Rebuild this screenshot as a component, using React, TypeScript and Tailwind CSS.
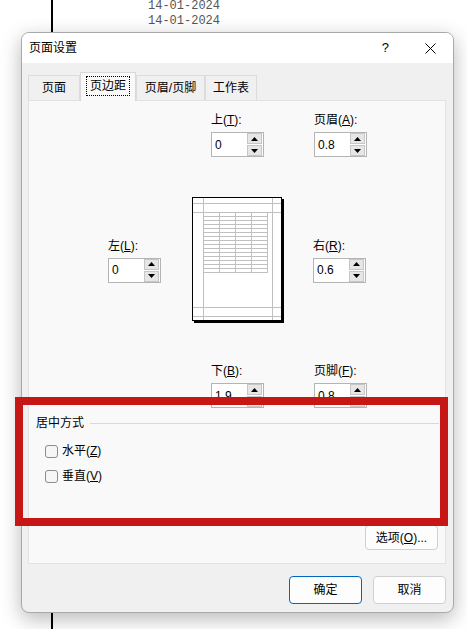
import React from "react";

const font = { fontFamily: '"Liberation Sans", "Noto Sans CJK SC", sans-serif' };

const Tri = ({ up }: { up?: boolean }) => (
  <svg width="7" height="4" viewBox="0 0 7 4">
    <path d={up ? "M0 4 L3.5 0 L7 4 Z" : "M0 0 L3.5 4 L7 0 Z"} fill="#000" />
  </svg>
);

const SpinBtn = ({ up }: { up?: boolean }) => (
  <div className="flex h-[11px] w-[15px] items-center justify-center border border-[#c6c6c6] bg-[#e6e6e6]">
    <Tri up={up} />
  </div>
);

const Spin = ({ value }: { value: string }) => (
  <div className="flex h-[25px] w-[53px] items-center border border-[#b4b4b4] bg-white pl-[3px] pr-px">
    <span className="flex-1 leading-4">{value}</span>
    <div className="flex flex-col gap-px">
      <SpinBtn up />
      <SpinBtn />
    </div>
  </div>
);

const Field = ({ name, k, value }: { name: string; k: string; value: string }) => (
  <div className="flex w-[53px] flex-col gap-1">
    <div className="h-4 whitespace-nowrap leading-4">
      {name}(<u>{k}</u>):
    </div>
    <Spin value={value} />
  </div>
);

const Preview = () => {
  const rows = [] as number[];
  for (let y = 15; y <= 75; y += 4) rows.push(y);
  return (
    <svg width="92" height="126" viewBox="0 0 92 126" className="block">
      <rect x="0.5" y="0.5" width="89" height="123" fill="#fff" stroke="#000" />
      <rect x="90" y="2" width="2" height="124" fill="#000" />
      <rect x="2" y="124" width="90" height="2" fill="#000" />
      <g stroke="#c0c0c0" strokeWidth="1">
        <line x1="11.5" y1="1" x2="11.5" y2="123" />
        <line x1="80.5" y1="1" x2="80.5" y2="123" />
        <line x1="1" y1="6.5" x2="89" y2="6.5" />
        <line x1="1" y1="15.5" x2="89" y2="15.5" />
        <line x1="1" y1="110.5" x2="89" y2="110.5" />
        <line x1="1" y1="119.5" x2="89" y2="119.5" />
        {rows.map((y) => (
          <line key={y} x1="11" y1={y + 0.5} x2="75" y2={y + 0.5} />
        ))}
        {[27, 43, 59, 75].map((x) => (
          <line key={x} x1={x + 0.5} y1="15" x2={x + 0.5} y2="76" />
        ))}
      </g>
    </svg>
  );
};

const Check = ({ label, k }: { label: string; k: string }) => (
  <div className="flex h-4 items-center gap-1 pl-4">
    <div className="h-[13px] w-[13px] rounded-[3px] border border-[#8d8d8d] bg-[#f6f6f6]" />
    <span className="leading-4">
      {label}(<u>{k}</u>)
    </span>
  </div>
);

export default function App() {
  return (
    <div className="relative h-[629px] w-[467px] overflow-hidden bg-white text-[12px] text-black" style={font}>
      {/* page behind the dialog */}
      <div className="absolute left-[51px] top-0 h-full w-[2px] bg-black" />
      <div
        className="absolute left-[148px] top-[-1px] text-[12px] leading-[15px] text-[#555]"
        style={{ fontFamily: '"Liberation Mono", monospace' }}
      >
        <div>14-01-2024</div>
        <div>14-01-2024</div>
      </div>

      {/* dialog */}
      <div className="absolute left-[21px] top-[32px] flex h-[581px] w-[433px] flex-col overflow-hidden rounded-[8px] border border-[#a9a9a9] bg-[#f0f0f0] shadow-[0_6px_20px_rgba(0,0,0,0.28)]">
        <div className="flex h-[30px] shrink-0 items-center bg-white pl-[7px]">
          <span className="flex-1 leading-4">页面设置</span>
          <span className="mr-[36px] text-[13px] leading-4">?</span>
          <svg width="11" height="11" viewBox="0 0 11 11" className="mr-[17px]">
            <path d="M0.5 0.5 L10.5 10.5 M10.5 0.5 L0.5 10.5" stroke="#000" strokeWidth="1" />
          </svg>
        </div>

        <div className="flex flex-1 flex-col pl-[6px] pt-[9px]">
          {/* tabs */}
          <div className="relative z-10 flex h-[28px] items-end">
            <div className="flex h-[25px] w-[52px] items-center justify-center border border-b-0 border-[#dcdcdc] bg-[#f0f0f0]">
              页面
            </div>
            <div className="-mb-px flex h-[29px] w-[56px] items-center justify-center border border-b-0 border-[#d9d9d9] bg-[#f9f9f9] pb-[2px]">
              <span className="border border-dotted border-black px-[3px] py-[1px] leading-4">页边距</span>
            </div>
            <div className="flex h-[25px] w-[69px] items-center justify-center border border-b-0 border-[#dcdcdc] bg-[#f0f0f0]">
              页眉/页脚
            </div>
            <div className="flex h-[25px] w-[52px] items-center justify-center border border-b-0 border-[#dcdcdc] bg-[#f0f0f0]">
              工作表
            </div>
          </div>

          {/* panel */}
          <div className="flex h-[464px] w-[418px] flex-col border border-[#e2e2e2] bg-[#f9f9f9] pt-[11px] pb-[13px]">
            <div className="flex pl-[182px]">
              <Field name="上" k="T" value="0" />
              <div className="ml-[50px]">
                <Field name="页眉" k="A" value="0.8" />
              </div>
            </div>

            <div className="mt-[40px] flex items-center pl-[79px]">
              <Field name="左" k="L" value="0" />
              <div className="ml-[31px]">
                <Preview />
              </div>
              <div className="ml-[29px]">
                <Field name="右" k="R" value="0.6" />
              </div>
            </div>

            <div className="mt-[40px] flex pl-[182px]">
              <Field name="下" k="B" value="1.9" />
              <div className="ml-[50px]">
                <Field name="页脚" k="F" value="0.8" />
              </div>
            </div>

            <div className="mt-[7px] flex items-center pl-[7px] pr-[6px]">
              <span className="leading-4">居中方式</span>
              <div className="ml-[6px] h-px flex-1 bg-[#d8d8d8]" />
            </div>
            <div className="mt-[12px]">
              <Check label="水平" k="Z" />
            </div>
            <div className="mt-[9px]">
              <Check label="垂直" k="V" />
            </div>

            <div className="mt-auto flex justify-end pr-[7px]">
              <div className="flex h-[25px] w-[73px] items-center justify-center rounded-[4px] border border-[#d0d0d0] bg-[#fdfdfd] leading-4">
                选项(<u>O</u>)...
              </div>
            </div>
          </div>

          <div className="mt-[12px] flex justify-end gap-[11px] pr-[7px]">
            <div className="flex h-[28px] w-[73px] items-center justify-center rounded-[4px] border border-[#0067c0] bg-[#fdfdfd]">
              确定
            </div>
            <div className="flex h-[28px] w-[73px] items-center justify-center rounded-[4px] border border-[#d0d0d0] bg-[#fdfdfd]">
              取消
            </div>
          </div>
        </div>
      </div>

      {/* red annotation frame */}
      <div className="absolute left-[15px] top-[397px] h-[129px] w-[433px] border-[8px] border-[#c71616]" />
    </div>
  );
}
